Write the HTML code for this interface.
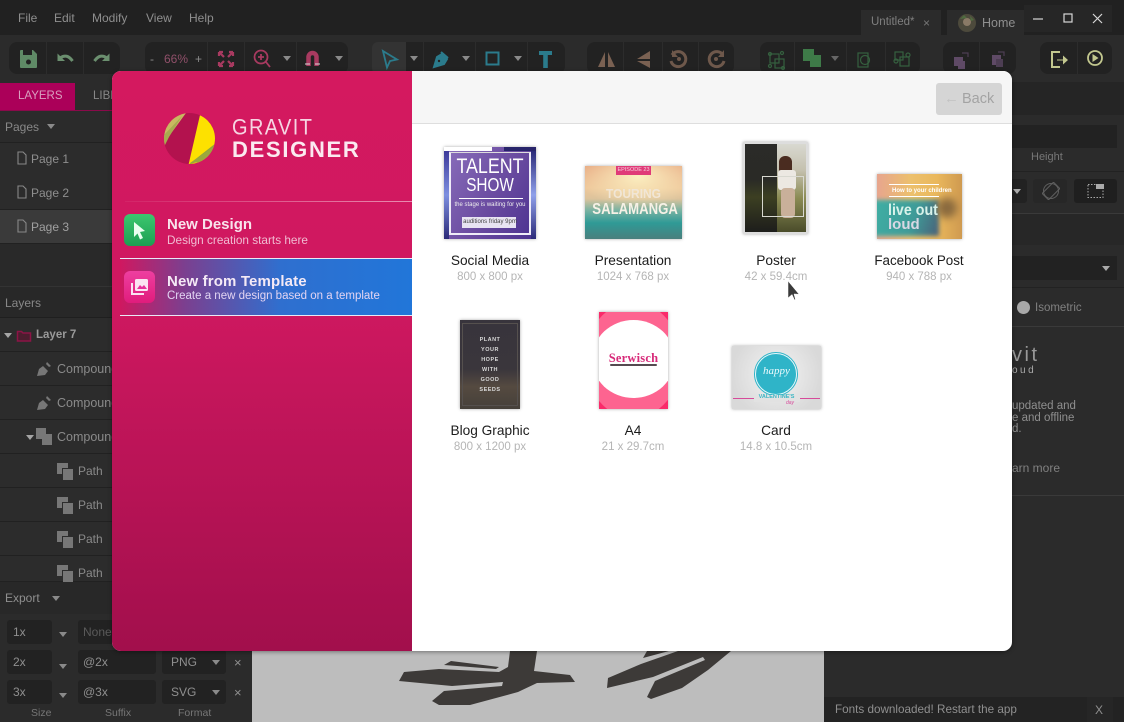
<!DOCTYPE html>
<html><head><meta charset="utf-8"><style>
*{box-sizing:border-box}
html,body{margin:0;padding:0;width:1124px;height:722px;overflow:hidden;background:#2a2a2a;font-family:"Liberation Sans",sans-serif}
.a{position:absolute}
.t{position:absolute;white-space:nowrap;line-height:1;color:#8f8f8f;font-size:12px}
.g{position:absolute;top:42px;height:32px;background:#222;border-radius:8px}
.s{position:absolute;top:42px;height:32px;width:1px;background:#2c2c2c}
.ar{position:absolute;width:0;height:0;border-left:4.500px solid transparent;border-right:4.500px solid transparent;border-top:5px solid #8a8a8a}
.row{position:absolute;left:0;width:112px;height:34px;border-bottom:1px solid #212121;background:#2c2c2c}
.in{position:absolute;background:#222;border-radius:3px;height:24px}
.lbl{position:absolute;width:140px;text-align:center;line-height:1;white-space:nowrap}
.ti{font-size:13.700px;color:#1c1c1c}
.su{font-size:11.500px;color:#b5b5b5}
.th{position:absolute;overflow:hidden;box-shadow:0 0 3px rgba(0,0,0,.35);filter:blur(.35px)}
</style></head><body>

<!-- top bar -->
<div class="a" style="left:0;top:0;width:1124px;height:35px;background:#212121"></div>
<span class="t" style="left:18px;top:12px">File</span>
<span class="t" style="left:54px;top:12px">Edit</span>
<span class="t" style="left:92px;top:12px">Modify</span>
<span class="t" style="left:146px;top:12px">View</span>
<span class="t" style="left:189px;top:12px">Help</span>
<div class="a" style="left:861px;top:10px;width:80px;height:25px;background:#2b2b2b"></div>
<span class="t" style="left:871px;top:17px;font-size:11.500px;color:#7f7f7f">Untitled*</span>
<span class="t" style="left:923px;top:17px;font-size:12px;color:#777">×</span>
<div class="a" style="left:947px;top:10px;width:77px;height:25px;background:#2b2b2b"></div>
<svg class="a" style="left:957px;top:13px" width="20" height="20"><circle cx="10" cy="10" r="9" fill="#4d4a3c"/><circle cx="10" cy="9" r="4" fill="#8a7a66"/><path d="M3 6l4-4 3 3zM13 3l4 4-3 1z" fill="#4f6b3f"/></svg>
<span class="t" style="left:982px;top:17px;font-size:12.500px;color:#8f8f8f">Home</span>
<div class="a" style="left:1024px;top:5px;width:88px;height:27px;background:#262626"></div>
<svg class="a" style="left:1024px;top:5px" width="88" height="27" fill="none" stroke="#d8d8d8" stroke-width="1.200"><path d="M9 14h10"/><rect x="40" y="9" width="8" height="8"/><path d="M69 9l9 9M78 9l-9 9"/></svg>

<!-- toolbar -->
<div class="a" style="left:0;top:35px;width:1124px;height:47px;background:#2b2b2b"></div>
<div class="g" style="left:9px;width:111px"></div>
<div class="g" style="left:145px;width:203px"></div>
<div class="g" style="left:372px;width:193px"></div>
<div class="g" style="left:587px;width:147px"></div>
<div class="g" style="left:760px;width:160px"></div>
<div class="g" style="left:943px;width:73px"></div>
<div class="g" style="left:1040px;width:72px"></div>
<div class="a" style="left:372px;top:42px;width:34px;height:32px;background:#333;border-radius:6px 0 0 6px"></div>
<div class="s" style="left:46px"></div><div class="s" style="left:83px"></div>
<div class="s" style="left:207px"></div><div class="s" style="left:244px"></div><div class="s" style="left:296px"></div>
<div class="s" style="left:423px"></div><div class="s" style="left:475px"></div><div class="s" style="left:527px"></div>
<div class="s" style="left:623px"></div><div class="s" style="left:662px"></div><div class="s" style="left:698px"></div>
<div class="s" style="left:794px"></div><div class="s" style="left:846px"></div><div class="s" style="left:885px"></div>
<div class="s" style="left:979px"></div><div class="s" style="left:1077px"></div>

<svg class="a" style="left:0;top:35px" width="1124" height="47" fill="none">
<!-- save -->
<path d="M21 15h12l4 4v13a1 1 0 0 1-1 1H21a1 1 0 0 1-1-1V16a1 1 0 0 1 1-1z" fill="#5f8a66"/><rect x="23" y="15" width="9" height="5" fill="#222"/><circle cx="28.500" cy="27" r="2.500" fill="#222"/>
<!-- undo redo -->
<path d="M60 23q7-5 12.500 3" stroke="#6b8f6f" stroke-width="3"/><path d="M57.500 18.500v7.500h7.500z" fill="#6b8f6f"/>
<path d="M107 23q-7-5-12.500 3" stroke="#6b8f6f" stroke-width="3"/><path d="M109.500 18.500v7.500H102z" fill="#6b8f6f"/>
<!-- zoom fit -->
<g stroke="#a83a60" stroke-width="2.200"><path d="M219 17l5 5M219 17h4M219 17v4M233 17l-5 5M233 17h-4M233 17v4M219 31l5-5M219 31h4M219 31v-4M233 31l-5-5M233 31h-4M233 31v-4"/></g>
<!-- zoom -->
<circle cx="261" cy="22" r="6.500" stroke="#a83a60" stroke-width="1.800"/><path d="M266 27l4 5M258 22h6M261 19v6" stroke="#a83a60" stroke-width="1.800"/>
<!-- magnet -->
<path d="M308.500 31V22a4 4 0 0 1 8 0v9" stroke="#a83a60" stroke-width="4.500"/><path d="M305 29h5M315 29h5" stroke="#d9d9d9" stroke-width="2" opacity=".5"/>
<!-- select -->
<path d="M383 16l14 8.500-7 1.500-3 6.500z" stroke="#2b7b8c" stroke-width="1.800"/>
<!-- pen -->
<path d="M434 32l3-10 5-3 5 5-3 5zM434 32l5-5" stroke="#2b7b8c" stroke-width="2" fill="#2b7b8c"/><path d="M441 17l7 6" stroke="#2b7b8c" stroke-width="2"/><circle cx="439" cy="26" r="1.200" fill="#222"/>
<!-- rect -->
<rect x="486.500" y="17.500" width="12" height="12" stroke="#2b7b8c" stroke-width="2"/>
<!-- T -->
<path d="M539 16h13v4h-4.200v13h-4.600V20H539z" fill="#2b7b8c"/>
<!-- flip -->
<path d="M605 17v15h-7zM608 17v15h7z" fill="#7a6152"/>
<path d="M650 16v8h-13zM650 26v7l-13-7z" fill="#7a6152"/>
<!-- rotate -->
<path d="M672 20a7.500 7.500 0 1 1-1 6" stroke="#6e584b" stroke-width="3"/><path d="M672 15v7h6z" fill="#6e584b"/><circle cx="679" cy="24" r="2" fill="#6e584b"/>
<path d="M723 20a7.500 7.500 0 1 0 1 6" stroke="#6e584b" stroke-width="3"/><path d="M724 15v7h-6z" fill="#6e584b"/><circle cx="716" cy="24" r="2" fill="#6e584b"/>
<!-- boolean etc -->
<g stroke="#35603f" stroke-width="1.200"><rect x="770" y="19" width="9" height="9"/><rect x="775" y="24" width="9" height="9"/><circle cx="770" cy="19" r="1.500"/><circle cx="782" cy="18" r="1.500"/><circle cx="770" cy="31" r="1.500"/><circle cx="783" cy="33" r="1.500"/></g>
<rect x="803" y="14" width="11" height="12" fill="#3e7a48"/><rect x="810" y="20" width="11" height="12" fill="#3e7a48"/>
<g stroke="#35603f" stroke-width="1.200"><rect x="858" y="18" width="10" height="14"/><circle cx="865" cy="25" r="4.500"/></g>
<g stroke="#35603f" stroke-width="1.200"><rect x="895" y="17" width="8" height="8"/><rect x="900" y="22" width="9" height="9"/><circle cx="896" cy="26" r="2"/><circle cx="908" cy="20" r="2"/></g>
<!-- arrange -->
<rect x="954" y="22" width="9" height="9" fill="#5f4a66"/><rect x="958" y="26" width="7" height="8" fill="#5f4a66"/><path d="M962 18h6v4" stroke="#4d3e53" stroke-width="1.200"/>
<rect x="992" y="20" width="9" height="10" fill="#5f4a66"/><rect x="996" y="24" width="7" height="8" fill="#4d3e53"/><path d="M998 17h6v4" stroke="#4d3e53" stroke-width="1.200"/>
<!-- export, play -->
<path d="M1060 17h-8v15h8" stroke="#c3c88f" stroke-width="2"/><path d="M1057 24.500h6v-4l5 4.500-5 4.500v-4h-6z" fill="#c3c88f"/>
<circle cx="1095" cy="23" r="7" stroke="#c3c88f" stroke-width="1.800"/><path d="M1092.500 19l6 4-6 4z" fill="#c3c88f"/>
</svg>
<span class="t" style="left:150px;top:53px;font-size:12px;color:#8a8a8a">-</span>
<span class="t" style="left:164px;top:53px;font-size:12px;color:#90506a">66%</span>
<span class="t" style="left:195px;top:53px;font-size:12px;color:#8a8a8a">+</span>
<div class="ar" style="left:283px;top:56px"></div><div class="ar" style="left:335px;top:56px"></div>
<div class="ar" style="left:410px;top:56px"></div><div class="ar" style="left:462px;top:56px"></div><div class="ar" style="left:514px;top:56px"></div>
<div class="ar" style="left:831px;top:56px;border-top-color:#666"></div>

<!-- left panel -->
<div class="a" style="left:0;top:82px;width:252px;height:640px;background:#2b2b2b"></div>
<div class="a" style="left:0;top:83px;width:75px;height:27px;background:#ab0059"></div>
<div class="a" style="left:0;top:110px;width:112px;height:1px;background:#8a0a4a"></div>
<span class="t" style="left:18px;top:91px;font-size:11.500px;color:#d9a0bf">LAYERS</span>
<span class="t" style="left:93px;top:91px;font-size:11.500px;color:#888">LIBR</span>
<span class="t" style="left:5px;top:121px;font-size:12px;color:#888">Pages</span>
<div class="ar" style="left:47px;top:124px"></div>
<div class="row" style="top:142px;height:35px;border-top:1px solid #212121"></div>
<div class="row" style="top:176px"></div>
<div class="row" style="top:210px;background:#3a3a3a"></div>
<div class="a" style="left:0;top:244px;width:112px;height:42px;background:#292929"></div>
<svg class="a" style="left:16px;top:151px" width="12" height="84" fill="none" stroke="#888" stroke-width="1.100"><path d="M2 1h5l3 3v9H2zM2 35h5l3 3v9H2zM2 69h5l3 3v9H2z"/></svg>
<span class="t" style="left:31px;top:153px;color:#8f8f8f">Page 1</span>
<span class="t" style="left:31px;top:187px;color:#8f8f8f">Page 2</span>
<span class="t" style="left:31px;top:221px;color:#a0a0a0">Page 3</span>
<div class="a" style="left:0;top:286px;width:112px;height:32px;background:#282828;border-top:1px solid #333;border-bottom:1px solid #1f1f1f"></div>
<span class="t" style="left:5px;top:297px;color:#888">Layers</span>
<div class="row" style="top:318px"></div><div class="row" style="top:352px"></div><div class="row" style="top:386px"></div>
<div class="row" style="top:420px"></div><div class="row" style="top:454px"></div><div class="row" style="top:488px"></div>
<div class="row" style="top:522px"></div><div class="row" style="top:556px;height:26px"></div>
<div class="ar" style="left:4px;top:333px;border-top-color:#a5a5a5"></div>
<svg class="a" style="left:16px;top:329px" width="16" height="13" fill="none"><path d="M1.500 2.500h4l1.500 1.500h7.500v8h-13z" stroke="#8c1446" stroke-width="1.500" fill="#4d1d2f"/></svg>
<span class="t" style="left:36px;top:330px;color:#9a9a9a;font-weight:bold;font-size:11.500px">Layer 7</span>
<svg class="a" style="left:36px;top:361px" width="16" height="50" fill="#777"><path d="M1 15l2-7 4-3 5 5-3 4zM11 1l4 4-2 1-3-3z"/><path d="M1 49l2-7 4-3 5 5-3 4zM11 35l4 4-2 1-3-3z"/></svg>
<span class="t" style="left:57px;top:363px;color:#8a8a8a;font-size:12.500px">Compound</span>
<span class="t" style="left:57px;top:397px;color:#8a8a8a;font-size:12.500px">Compound</span>
<div class="ar" style="left:26px;top:435px;border-top-color:#a5a5a5"></div>
<svg class="a" style="left:36px;top:428px" width="17" height="18" fill="#777"><rect x="0" y="0" width="10" height="11"/><rect x="6" y="6" width="10" height="11"/></svg>
<span class="t" style="left:57px;top:431px;color:#8a8a8a;font-size:12.500px">Compound</span>
<svg class="a" style="left:57px;top:463px" width="17" height="120" fill="#777">
<path d="M0 0h11v5H5v6H0zM6 6h10v11H6z"/>
<path d="M0 34h11v5H5v6H0zM6 40h10v11H6zM0 68h11v5H5v6H0zM6 74h10v11H6zM0 102h11v5H5v6H0zM6 108h10v11H6z"/></svg>
<span class="t" style="left:78px;top:465px;color:#8a8a8a">Path</span>
<span class="t" style="left:78px;top:499px;color:#8a8a8a">Path</span>
<span class="t" style="left:78px;top:533px;color:#8a8a8a">Path</span>
<span class="t" style="left:78px;top:567px;color:#8a8a8a">Path</span>
<div class="a" style="left:0;top:582px;width:252px;height:32px;background:#282828"></div>
<span class="t" style="left:5px;top:592px;color:#8f8f8f">Export</span>
<div class="ar" style="left:52px;top:596px"></div>
<div class="in" style="left:7px;top:620px;width:45px"></div><div class="in" style="left:78px;top:620px;width:78px"></div>
<div class="in" style="left:7px;top:650px;width:45px"></div><div class="in" style="left:78px;top:650px;width:78px"></div><div class="in" style="left:162px;top:650px;width:64px"></div>
<div class="in" style="left:7px;top:680px;width:45px"></div><div class="in" style="left:78px;top:680px;width:78px"></div><div class="in" style="left:162px;top:680px;width:64px"></div>
<span class="t" style="left:13px;top:626px;color:#8f8f8f">1x</span><span class="t" style="left:83px;top:626px;color:#5a5a5a">None</span>
<span class="t" style="left:13px;top:656px;color:#8f8f8f">2x</span><span class="t" style="left:83px;top:656px;color:#8f8f8f">@2x</span><span class="t" style="left:171px;top:656px;color:#8f8f8f">PNG</span>
<span class="t" style="left:13px;top:686px;color:#8f8f8f">3x</span><span class="t" style="left:83px;top:686px;color:#8f8f8f">@3x</span><span class="t" style="left:171px;top:686px;color:#8f8f8f">SVG</span>
<div class="ar" style="left:59px;top:632px"></div><div class="ar" style="left:59px;top:664px"></div><div class="ar" style="left:59px;top:693px"></div>
<div class="ar" style="left:212px;top:660px"></div><div class="ar" style="left:212px;top:690px"></div>
<span class="t" style="left:234px;top:656px;color:#8f8f8f;font-size:13px">×</span>
<span class="t" style="left:234px;top:686px;color:#8f8f8f;font-size:13px">×</span>
<span class="t" style="left:31px;top:708px;font-size:10.500px;color:#777">Size</span>
<span class="t" style="left:105px;top:708px;font-size:10.500px;color:#777">Suffix</span>
<span class="t" style="left:178px;top:708px;font-size:10.500px;color:#777">Format</span>

<!-- canvas -->
<div class="a" style="left:252px;top:640px;width:572px;height:82px;background:#bdbdbd"></div>
<svg class="a" style="left:380px;top:640px" width="380" height="82" fill="#3d3a38">
<g transform="translate(-380,-640)">
<path d="M510 651h27l-3 20 36 4 5 7-38 1-19 9-48 13h-31l-7-4 12-10 58-5 1-4-51 4-53-5 5-9 35-3 60 3 9-5z"/>
<path d="M451 661l48 6-3 2-52-4z"/>
<path d="M607 688l1-10 33-14 37-13h53l-23 19-26 18-31 11-4-2 8-16 50-21-2-3-50 20z"/>
<path d="M643 658l4-7h22z"/>
</g>
</svg>

<!-- right panel -->
<div class="a" style="left:824px;top:82px;width:300px;height:640px;background:#2b2b2b"></div>
<div class="a" style="left:1012px;top:82px;width:112px;height:33px;background:#252525"></div>
<div class="a" style="left:1012px;top:125px;width:105px;height:23px;background:#222"></div>
<span class="t" style="left:1031px;top:152px;font-size:11px;color:#777">Height</span>
<div class="a" style="left:1012px;top:171px;width:112px;height:1px;background:#222"></div>
<div class="a" style="left:1012px;top:179px;width:15px;height:24px;background:#222;border-radius:0 3px 3px 0"></div>
<div class="ar" style="left:1013px;top:189px;border-top-color:#aaa"></div>
<div class="a" style="left:1033px;top:179px;width:34px;height:24px;background:#272727;border-radius:3px"></div>
<svg class="a" style="left:1042px;top:182px" width="18" height="18" fill="none" stroke="#5f5f5f"><circle cx="9" cy="9" r="7.500"/><rect x="4.500" y="1" width="9" height="16" transform="rotate(45 9 9)"/></svg>
<div class="a" style="left:1074px;top:179px;width:43px;height:24px;background:#1f1f1f;border-radius:3px"></div>
<svg class="a" style="left:1087px;top:183px" width="18" height="16" fill="none"><rect x="1" y="1.500" width="15" height="13" stroke="#aaa" stroke-dasharray="1.500 1.500"/><rect x="9" y="1" width="8" height="5" fill="#aaa"/></svg>
<div class="a" style="left:1012px;top:213px;width:112px;height:32px;background:#272727;border-top:1px solid #3a3a3a"></div>
<div class="a" style="left:1012px;top:256px;width:105px;height:24px;background:#222"></div>
<div class="ar" style="left:1102px;top:266px;border-top-color:#aaa"></div>
<div class="a" style="left:1012px;top:287px;width:112px;height:1px;background:#222"></div>
<div class="a" style="left:1017px;top:301px;width:13px;height:13px;border-radius:50%;background:#a8a8a8"></div>
<span class="t" style="left:1035px;top:303px;color:#808080;font-size:11.500px">Isometric</span>
<div class="a" style="left:1012px;top:326px;width:112px;height:1px;background:#3a3a3a"></div>
<span class="t" style="left:1012px;top:345px;font-size:20px;letter-spacing:2.500px;color:#999">vit</span>
<span class="t" style="left:1012px;top:366px;font-size:10px;letter-spacing:2.500px;color:#aaa">oud</span>
<span class="t" style="left:1012px;top:401px;font-size:11.500px;color:#8f8f8f">updated and</span>
<span class="t" style="left:1012px;top:413px;font-size:11.500px;color:#8f8f8f">e and offline</span>
<span class="t" style="left:1012px;top:424px;font-size:11.500px;color:#8f8f8f">d.</span>
<span class="t" style="left:1012px;top:462px;color:#808080">arn more</span>
<div class="a" style="left:1012px;top:495px;width:112px;height:1px;background:#3a3a3a"></div>
<div class="a" style="left:824px;top:697px;width:300px;height:25px;background:#232323"></div>
<div class="a" style="left:1087px;top:697px;width:26px;height:25px;background:#262626"></div>
<span class="t" style="left:835px;top:704px;font-size:11.700px;color:#8f8f8f">Fonts downloaded! Restart the app</span>
<span class="t" style="left:1095px;top:704px;font-size:12px;color:#8f8f8f">X</span>

<!-- modal -->
<div class="a" style="left:112px;top:71px;width:900px;height:580px;border-radius:9px;overflow:hidden;background:#fff;box-shadow:0 1px 4px rgba(0,0,0,.4)">
 <div class="a" style="left:0;top:0;width:300px;height:580px;background:linear-gradient(#d4195f 0,#cf1860 40%,#a20f4c 100%)"></div>
 <div class="a" style="left:300px;top:0;width:600px;height:53px;background:#f6f6f6;border-bottom:1px solid #dedede"></div>
 <div class="a" style="left:824px;top:12px;width:66px;height:32px;background:#d5d5d5;border-radius:3px"></div>
 <span class="t" style="left:832px;top:20px;font-size:15px;color:#c2c2c2">←</span>
 <span class="t" style="left:850px;top:21px;font-size:14.500px;color:#a3a3a3">Back</span>
</div>

<!-- logo -->
<svg class="a" style="left:164px;top:113px" width="52" height="52" viewBox="0 0 52 52">
<defs><clipPath id="c"><circle cx="25.500" cy="25.500" r="25.500"/></clipPath></defs>
<g clip-path="url(#c)">
<rect width="52" height="52" fill="#b3124e"/>
<path d="M0 30L22 0H0z" fill="#c9b860"/>
<path d="M0 22L18 3 5 24 0 34z" fill="#a9a94f"/>
<path d="M36 2h18v52H24z" fill="#fde100"/>
<path d="M52 30L24 52l3-1 25-10z" fill="#92a53a"/>
<path d="M52 32L26 50l26-2z" fill="#9aa83e"/>
</g></svg>
<span class="t" style="left:232px;top:118px;font-size:20px;letter-spacing:1.400px;color:#f6d5e2;transform-origin:left center;transform:scaleY(1.1)">GRAVIT</span>
<span class="t" style="left:232px;top:139px;font-size:22px;font-weight:bold;letter-spacing:1.700px;color:#fbe9f0">DESIGNER</span>

<!-- menu items -->
<div class="a" style="left:125px;top:201px;width:287px;height:1px;background:linear-gradient(90deg,rgba(255,255,255,.05),rgba(255,255,255,.5))"></div>
<div class="a" style="left:124px;top:214px;width:31px;height:32px;border-radius:6px;background:linear-gradient(#3cc76f,#1d9f52)"></div>
<svg class="a" style="left:131px;top:221px" width="18" height="20"><path d="M3 1l11 9-5 1 3 6-3 1.500-2.500-6L3 16z" fill="#eafff0"/></svg>
<span class="t" style="left:167px;top:217px;font-size:15px;font-weight:bold;color:#f8e4ec">New Design</span>
<span class="t" style="left:167px;top:235px;font-size:11.800px;color:#f0bcd2">Design creation starts here</span>
<div class="a" style="left:120px;top:258px;width:292px;height:58px;background:linear-gradient(90deg,rgba(200,25,95,0) 0,#7c3f8f 22%,#2f6fcf 55%,#2176d9 100%);border-top:1px solid #e9e9f6;border-bottom:1px solid #e9e9f6"></div>
<div class="a" style="left:124px;top:271px;width:31px;height:32px;border-radius:6px;background:linear-gradient(#ee3fa0,#e01c7c)"></div>
<svg class="a" style="left:130px;top:278px" width="20" height="18"><rect x="5" y="1" width="13" height="12" rx="1.500" fill="#fbe4f2"/><path d="M7 11l3-4 2 2 2-2 3 4z" fill="#e6309a"/><path d="M2 5v11h12" stroke="#fbe4f2" stroke-width="2" fill="none"/></svg>
<span class="t" style="left:167px;top:274px;font-size:15px;font-weight:bold;letter-spacing:.15px;color:#f5eaf6">New from Template</span>
<span class="t" style="left:167px;top:291px;font-size:11.500px;color:#e2d4f2">Create a new design based on a template</span>

<!-- thumbs -->
<div class="th" style="left:444px;top:147px;width:92px;height:92px;background:linear-gradient(120deg,#8a6fbc,#6a4ba0 55%,#4a3190)">
 <div class="a" style="left:0;top:0;width:48px;height:4px;background:#fff"></div>
 <div class="a" style="left:60px;top:0;width:32px;height:4px;background:#28246a"></div>
 <div class="a" style="left:0;top:4px;width:5px;height:88px;background:linear-gradient(#3d3a9a,#7d8fe0,#2b2a78)"></div>
 <div class="a" style="left:87px;top:4px;width:5px;height:88px;background:linear-gradient(#2b2a78,#8fa0ea,#2b2a78)"></div>
 <div class="a" style="left:5px;top:5px;width:82px;height:83px;border:2px solid #efecf8;border-top:1px solid #ddd"></div>
 <div class="t" style="left:0;width:92px;text-align:center;top:9px;font-size:21px;color:#fff;transform:scaleX(.85)">TALENT</div>
 <div class="t" style="left:0;width:92px;text-align:center;top:29px;font-size:18px;color:#fff;transform:scaleX(.85)">SHOW</div>
 <div class="a" style="left:15px;top:51px;width:64px;height:1px;background:#fff"></div>
 <div class="t" style="left:0;width:92px;text-align:center;top:55px;font-size:6px;color:#eee">the stage is waiting for you</div>
 <div class="a" style="left:18px;top:70px;width:54px;height:11px;background:#e8e4f2"></div>
 <div class="t" style="left:0;width:92px;text-align:center;top:72px;font-size:6px;color:#444">auditions friday 9pm</div>
</div>
<div class="th" style="left:585px;top:166px;width:97px;height:73px;background:radial-gradient(ellipse 60px 30px at 55% 15%,#fbeec0,rgba(251,238,192,0)),linear-gradient(#e8ab84 0,#eec79a 30%,#dcc39c 45%,#7db3a2 60%,#2f9a96 78%,#4a7f7d 100%)">
 <div class="a" style="left:31px;top:0;width:35px;height:9px;background:#e03a78"></div>
 <div class="t" style="left:31px;width:35px;text-align:center;top:2px;font-size:5.500px;color:#f6d0dd">EPISODE 23</div>
 <div class="t" style="left:0;width:97px;text-align:center;top:21px;font-size:13px;font-weight:bold;color:#f1e6d6;transform:scaleX(.92)">TOURING</div>
 <div class="t" style="left:0;width:97px;text-align:center;top:36px;font-size:15.500px;font-weight:bold;color:#f6f1e6;transform:scaleX(.85)">SALAMANGA</div>
</div>
<div class="th" style="left:743px;top:142px;width:65px;height:92px;background:#ddd">
 <div class="a" style="left:2px;top:2px;width:61px;height:88px;background:linear-gradient(#d8d8d0 0,#c4c0ae 30%,#8a8a52 62%,#4a4c2a 100%)"></div>
 <div class="a" style="left:2px;top:2px;width:32px;height:88px;background:linear-gradient(#2b2b28,#2a2a26 40%,#3c3f22 60%,#1d1d1b)"></div>
 <div class="a" style="left:36px;top:14px;width:13px;height:20px;background:#4a2c20;border-radius:6px"></div>
 <div class="a" style="left:35px;top:28px;width:18px;height:20px;background:#ece8e2;border-radius:3px"></div>
 <div class="a" style="left:38px;top:46px;width:14px;height:30px;background:#c9b09a;border-radius:4px"></div>
 <div class="a" style="left:19px;top:34px;width:42px;height:41px;border:1px solid #d8d8d0"></div>
</div>
<div class="th" style="left:877px;top:174px;width:85px;height:65px;background:linear-gradient(90deg,#e7a58e,#ecc06d 40%,#eab85c 70%,#cf9a50)">
 <div class="a" style="left:-4px;top:26px;width:66px;height:36px;filter:blur(2px);background:linear-gradient(110deg,#3fb0a5,#3f9b98 60%,#4a5f78)"></div>
 <div class="a" style="left:60px;top:24px;width:20px;height:20px;border-radius:50%;background:#8a6a3e;filter:blur(4px)"></div>
 <div class="a" style="left:12px;top:10px;width:50px;height:1px;background:#fff"></div>
 <div class="a" style="left:12px;top:22px;width:50px;height:1px;background:#fff"></div>
 <div class="t" style="left:15px;top:14px;font-size:6px;color:#fff;font-weight:bold">How to your children</div>
 <div class="t" style="left:11px;top:29px;font-size:15.500px;font-weight:bold;color:#d8f2ea;transform-origin:left;transform:scaleX(.92)">live out</div>
 <div class="t" style="left:11px;top:43px;font-size:15px;font-weight:bold;color:#d8d8e4">loud</div>
</div>
<div class="th" style="left:460px;top:320px;width:60px;height:89px;background:linear-gradient(#38343c,#3a363c 55%,#554a40 75%,#45403a)">
 <div class="a" style="left:2px;top:3px;width:56px;height:83px;border:1px solid #55504e"></div>
 <div class="t" style="left:0;width:60px;text-align:center;top:15px;font-size:5.500px;line-height:10px;font-weight:bold;color:#d8d8d8;white-space:normal;letter-spacing:.5px">PLANT<br>YOUR<br>HOPE<br>WITH<br>GOOD<br>SEEDS</div>
</div>
<div class="th" style="left:599px;top:312px;width:69px;height:97px;background:#fa2a6a">
 <div class="a" style="left:-14px;top:-10px;width:96px;height:116px;border-radius:50%;background:#fd6490"></div>
 <div class="a" style="left:-7px;top:8px;width:83px;height:78px;border-radius:50%;background:#fff"></div>
 <div class="t" style="left:0;width:69px;text-align:center;top:40px;font-size:12.500px;font-weight:bold;font-family:'Liberation Serif',serif;color:#d72a79;letter-spacing:.2px">Serwisch</div>
 <div class="a" style="left:11px;top:52px;width:47px;height:2px;background:#554a50;border-radius:2px"></div>
</div>
<div class="th" style="left:732px;top:346px;width:89px;height:63px;background:radial-gradient(circle at 50% 45%,#f4f4f4,#d9d9d9 80%)">
 <div class="a" style="left:23px;top:7px;width:42px;height:42px;border-radius:50%;background:#2fb4c8;border:1px solid #e8f8fb;outline:1px solid #2fb4c8"></div>
 <div class="t" style="left:0;width:89px;text-align:center;top:20px;font-size:11px;font-style:italic;color:#eefbfd;font-family:'Liberation Serif',serif">happy</div>
 <div class="a" style="left:1px;top:52px;width:87px;height:1px;background:#d64b9a"></div>
 <div class="a" style="left:22px;top:49px;width:46px;height:7px;background:#e2e2e2"></div>
 <div class="t" style="left:0;width:89px;text-align:center;top:49px;font-size:5.500px;font-weight:bold;color:#3ab6c4">VALENTINE'S</div>
 <div class="t" style="left:54px;top:55px;font-size:5px;color:#d64b9a;font-style:italic">day</div>
</div>

<!-- labels -->
<div class="lbl ti" style="left:420px;top:254px">Social Media</div><div class="lbl su" style="left:420px;top:272px">800 x 800 px</div>
<div class="lbl ti" style="left:563px;top:254px">Presentation</div><div class="lbl su" style="left:563px;top:272px">1024 x 768 px</div>
<div class="lbl ti" style="left:706px;top:254px">Poster</div><div class="lbl su" style="left:706px;top:272px">42 x 59.4cm</div>
<div class="lbl ti" style="left:849px;top:254px;font-size:13.400px">Facebook Post</div><div class="lbl su" style="left:849px;top:272px">940 x 788 px</div>
<div class="lbl ti" style="left:420px;top:424px">Blog Graphic</div><div class="lbl su" style="left:420px;top:442px">800 x 1200 px</div>
<div class="lbl ti" style="left:563px;top:424px">A4</div><div class="lbl su" style="left:563px;top:442px">21 x 29.7cm</div>
<div class="lbl ti" style="left:706px;top:424px">Card</div><div class="lbl su" style="left:706px;top:442px">14.8 x 10.5cm</div>

<!-- cursor -->
<svg class="a" style="left:786px;top:280px" width="16" height="22"><path d="M2 1v17l4-3.500 2.500 5.500 1-.5-1.500-5.500 5 .2z" fill="#3a3a3a" stroke="#fff" stroke-width=".5"/></svg>
</body></html>
